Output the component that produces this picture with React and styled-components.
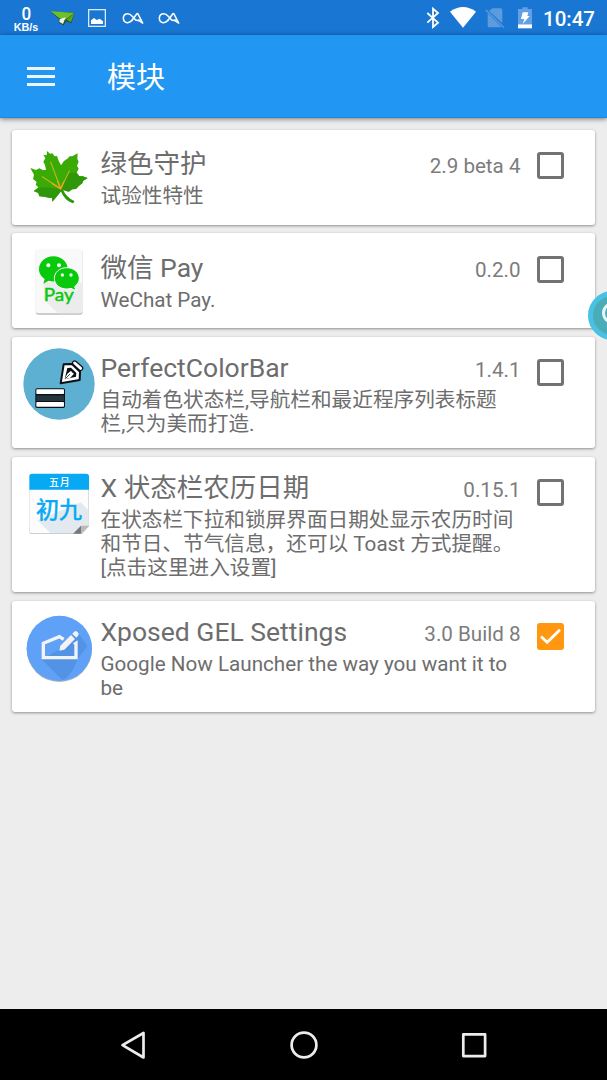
import React from 'react';
import styled, { createGlobalStyle } from 'styled-components';

const GlobalStyle = createGlobalStyle`
  * { box-sizing: border-box; }
  body {
    margin: 0;
    background: #ededed;
    font-family: Roboto, "Noto Sans CJK SC", sans-serif;
  }
`;

const Screen = styled.div`
  position: relative;
  display: flex;
  flex-direction: column;
  width: 607px;
  height: 1080px;
  overflow: hidden;
  background: #ededed;
`;

const StatusBar = styled.header`
  display: flex;
  align-items: center;
  justify-content: space-between;
  flex: none;
  height: 35px;
  padding: 0 12px 0 13px;
  background: #1976d2;
  color: #fff;
`;

const StatusGroup = styled.div`
  display: flex;
  align-items: center;
  height: 35px;
`;

const NetSpeed = styled.div`
  display: flex;
  flex-direction: column;
  align-items: center;
  width: 26px;
  padding-top: 1px;
`;

const SpeedValue = styled.span`
  font-size: 18.5px;
  font-weight: 500;
  line-height: 18px;
  transform: scaleX(0.92);
`;

const SpeedUnit = styled.span`
  font-family: "Liberation Sans", sans-serif;
  font-size: 10.8px;
  font-weight: 700;
  line-height: 9px;
`;

const StatusIcon = styled.svg`
  display: block;
  flex: none;
  width: ${(p) => p.$w}px;
  height: ${(p) => p.$h}px;
  margin-left: ${(p) => p.$gap}px;
`;

const Clock = styled.span`
  margin-left: 11px;
  padding-top: 2px;
  font-size: 20.5px;
  font-weight: 500;
  line-height: 24px;
`;

const Toolbar = styled.div`
  display: flex;
  align-items: center;
  flex: none;
  height: 83px;
  padding-left: 27px;
  background: #2196f3;
  border-bottom: 1px solid #1e88e0;
  box-shadow: 0 1px 5px rgba(0, 0, 0, 0.5);
  color: #fff;
`;

const MenuButton = styled.button`
  display: flex;
  flex-direction: column;
  gap: 5px;
  width: 28px;
  padding: 0;
  border: 0;
  background: none;
`;

const MenuLine = styled.span`
  height: 3px;
  background: #eef6fd;
`;

const Title = styled.h1`
  margin: 0 0 0 52px;
  padding-top: 4px;
  font-size: 29px;
  font-weight: 400;
  line-height: 40px;
`;

const ModuleList = styled.main`
  display: flex;
  flex: 1;
  flex-direction: column;
  gap: 8.5px;
  padding: 11.5px 12px 0;
`;

const Card = styled.article`
  display: flex;
  min-height: 95px;
  padding: 11.5px 31px 11.5px 11px;
  border-radius: 3px;
  background: #fff;
  box-shadow: 0 1px 3px rgba(0, 0, 0, 0.4);
`;

const ModuleIcon = styled.svg`
  display: block;
  flex: none;
  width: 72px;
  height: 72px;
`;

const Details = styled.div`
  flex: 1;
  align-self: center;
  min-width: 0;
  margin-left: 5.5px;
  color: #6d6d6d;
`;

const Heading = styled.div`
  display: flex;
  align-items: baseline;
  justify-content: space-between;
  height: 39.5px;
  padding-top: 3.5px;
  line-height: 32px;
`;

const ModuleName = styled.h2`
  margin: 0;
  font-size: 26.5px;
  font-weight: 400;
  line-height: 32px;
`;

const Version = styled.span`
  color: #7c7c7c;
  font-size: 20.6px;
`;

const Description = styled.p`
  margin: 0;
  padding: 0 4px 1px 0;
  font-size: 20.65px;
  line-height: 24px;
  white-space: pre-line;
`;

const Checkbox = styled.span`
  display: flex;
  align-items: center;
  justify-content: center;
  flex: none;
  width: 27px;
  height: 27px;
  margin: 11px 0 0 16.5px;
  border: ${(p) => (p.$checked ? '0' : '3px solid #727272')};
  border-radius: 3px;
  background: ${(p) => (p.$checked ? '#ff9810' : 'transparent')};
`;

const AssistBubble = styled.div`
  position: absolute;
  top: 290.5px;
  left: 588px;
  display: flex;
  align-items: center;
  justify-content: center;
  width: 49px;
  height: 49px;
  border: 5px solid #48c1e3;
  border-radius: 50%;
  background: #4bacb9;
`;

const BubbleRing = styled.span`
  width: 22px;
  height: 22px;
  margin-top: -4px;
  border: 3px solid #e8f4f6;
  border-radius: 50%;
`;

const NavBar = styled.nav`
  display: flex;
  align-items: center;
  justify-content: space-between;
  flex: none;
  height: 71px;
  padding: 0 118px;
  background: #000;
`;

const NavIcon = styled.svg`
  display: block;
  width: 30px;
  height: 30px;
  fill: none;
  stroke: #ececec;
  stroke-width: 2.7;
  stroke-linejoin: round;
`;

const LeafIcon = () => (
  <ModuleIcon viewBox="70 64 216 216">
    <path
      d="M142 94 L151 102 L158 101 L165 110 L172 109 L177 123 L184 137 L193 124 L203 117 L210 110 L218 110 L234 101 L233 117 L237 126 L232 138 L237 147 L231 159 L239 170 L249 170 L264 175 L250 184 L248 191 L238 198 L229 208 L218 209 L207 216 L190 211 Q198 232 224 245 L220 251 Q195 243 184 215 L177 224 L168 235 L158 246 L157 235 L145 234 L134 230 L119 230 L116 220 L102 214 L116 203 L108 195 L111 187 L100 178 L103 165 L92 145 L109 151 L119 146 L129 151 L139 151 L136 136 L131 126 L137 116 L131 105 L141 107 Z"
      fill="#3aab06"
    />
    <path
      d="M184 207 L203 159 L231 159 L239 170 L249 170 L264 175 L250 184 L248 191 L238 198 L229 208 L218 209 L207 216 L190 211 Q198 232 224 245 L220 251 Q195 243 184 215 L158 246 L157 235 L119 230 L116 220 L102 214 L125 202 Z"
      fill="#31970a"
    />
    <g fill="none" strokeLinecap="round">
      <path d="M183 207 L153 127 M183 207 L209 154 M183 207 L128 171" stroke="#c0b51f" strokeWidth="3.4" />
      <path d="M183 208 L174 185 M183 208 L192 187 M183 208 L158 192" stroke="#f0a41a" strokeWidth="4" />
    </g>
  </ModuleIcon>
);

const WeChatIcon = () => (
  <ModuleIcon viewBox="69 59 216 216">
    <rect x="107" y="72" width="141" height="196" rx="9" fill="#bdbdbd" />
    <rect x="106" y="70" width="142" height="194" rx="9" fill="#f9f9f9" />
    <path d="M131 173 L230 160 L248 178 V255 Q248 264 239 264 H174 L131 222 Z" fill="#ececec" />
    <path
      d="M160 93 C136 93 117 110 117 132 C117 145 124 154 134 161 L130 175 L146 166 Q155 169 164 168 C185 168 203 151 203 131 C203 110 184 93 160 93 Z"
      fill="#09c90c"
    />
    <path
      d="M200 127 C179 127 163 141 163 159 C163 177 179 191 200 191 Q207 191 213 189 L228 196 L224 184 C233 177 238 169 238 159 C238 141 221 127 200 127 Z"
      fill="#09c90c"
      stroke="#f7fff7"
      strokeWidth="3"
    />
    <g fill="#f3fff3">
      <circle cx="145" cy="120" r="6" />
      <circle cx="177" cy="120" r="6" />
      <circle cx="187" cy="149" r="5" />
      <circle cx="213" cy="149" r="5" />
    </g>
    <text
      x="131"
      y="226"
      fill="#09c90c"
      stroke="#09c90c"
      strokeWidth="1.4"
      fontFamily="Lato, sans-serif"
      fontSize="52"
      textLength="90"
      lengthAdjust="spacingAndGlyphs"
    >
      Pay
    </text>
  </ModuleIcon>
);

const ColorBarIcon = () => (
  <ModuleIcon viewBox="69 39 216 216">
    <circle cx="177" cy="147" r="107" fill="#5db0d2" />
    <rect x="106" y="160" width="89" height="59" rx="5" fill="#0b1014" />
    <rect x="109" y="181" width="83" height="17" fill="#25343d" />
    <rect x="109" y="163" width="83" height="14" rx="2" fill="#fff" />
    <rect x="109" y="201" width="83" height="14" rx="2" fill="#fff" />
    <g strokeLinejoin="round" strokeLinecap="round">
      <path d="M191 88 L216 87 L240 110 L239 135 L182 145 Z" fill="#fff" stroke="#0b1014" strokeWidth="6" />
      <path d="M202 99 L213 98 L229 114 L228 125 L194 133 Z" fill="#0b1014" />
      <path d="M194 133 L202 116 L213 107 L216 112 L222 116 L211 128 Z" fill="#fff" />
      <path d="M197 130 L209 118" fill="none" stroke="#0b1014" strokeWidth="2.4" />
      <path d="M224 84 L242 100" fill="none" stroke="#0b1014" strokeWidth="16" />
      <path d="M224 84 L242 100" fill="none" stroke="#fff" strokeWidth="9" />
    </g>
  </ModuleIcon>
);

const CalendarIcon = () => (
  <ModuleIcon viewBox="69 40 216 216">
    <path d="M88 104 H267 V215 L246 238 H94 Q88 238 88 232 Z" fill="#c9ced0" />
    <path d="M89 104 H265 V213 L243 235 H94 Q89 235 89 230 Z" fill="#fcfcfc" />
    <path d="M112 197 L243 143 L265 167 V213 L220 235 H151 Z" fill="#e3eaef" />
    <path d="M88 105 V65 Q88 57 96 57 H259 Q267 57 267 65 V105 Z" fill="#08a9f4" />
    <path d="M219 237 L243 213 V237 Z" fill="#777" />
    <path d="M243 213 H267 L243 237 Z" fill="#b9b9b9" />
    <text x="147" y="94" fill="#fff" fontSize="30" fontFamily="Noto Sans CJK SC, sans-serif" fontWeight="500" textLength="62">
      五月
    </text>
    <text x="108" y="189" fill="#08a9f4" stroke="#08a9f4" strokeWidth="1.8" fontSize="69" fontFamily="Noto Sans CJK SC, sans-serif" fontWeight="400" textLength="138">
      初九
    </text>
  </ModuleIcon>
);

const GelIcon = () => (
  <ModuleIcon viewBox="69 36 216 216">
    <circle cx="178" cy="148" r="98" fill="#a9b4c2" />
    <circle cx="178" cy="145" r="98" fill="#5ea1f6" />
    <path d="M125 178 L187 240 Q212 232 233 178 L262 138 L234 98 L180 148 Z" fill="#5293e6" />
    <path
      d="M191 118 L178 110 L130 130 V173 H228 V130 L222 134"
      fill="none"
      stroke="#f3f3f3"
      strokeWidth="10"
      strokeLinejoin="miter"
    />
    <path d="M178 152 L181 137 L213 105 L225 117 L193 149 Z" fill="#f3f3f3" />
    <path d="M217 101 L223 95 Q227 91 231 95 L235 99 Q238 103 234 107 L229 113 Z" fill="#f3f3f3" />
  </ModuleIcon>
);

const InfinityAIcon = ({ gap }) => (
  <StatusIcon $w={22} $h={14} $gap={gap} viewBox="0 0 66 42">
    <path
      d="M30 28 Q23 36 15 35 Q4 33 4 21 Q5 8 17 8 Q24 8 30 15 L39 25 Q45 31 52 27"
      fill="none"
      stroke="#fff"
      strokeWidth="4.6"
      strokeLinecap="round"
    />
    <path
      d="M29 29 L44 9 Q46 6 48 9 L62 36 L50 28"
      fill="none"
      stroke="#fff"
      strokeWidth="4.8"
      strokeLinecap="round"
      strokeLinejoin="round"
    />
  </StatusIcon>
);

const modules = [
  { name: '绿色守护', version: '2.9 beta 4', text: '试验性特性', Icon: LeafIcon },
  { name: '微信 Pay', version: '0.2.0', text: 'WeChat Pay.', Icon: WeChatIcon },
  {
    name: 'PerfectColorBar',
    version: '1.4.1',
    text: '自动着色状态栏,导航栏和最近程序列表标题栏,只为美而打造.',
    Icon: ColorBarIcon,
  },
  {
    name: 'X 状态栏农历日期',
    version: '0.15.1',
    text: '在状态栏下拉和锁屏界面日期处显示农历时间和节日、节气信息，还可以 Toast 方式提醒。\n[点击这里进入设置]',
    Icon: CalendarIcon,
  },
  {
    name: 'Xposed GEL Settings',
    version: '3.0 Build 8',
    text: 'Google Now Launcher the way you want it to be',
    Icon: GelIcon,
    checked: true,
  },
];

const ModuleCard = ({ name, version, text, Icon, checked }) => (
  <Card>
    <Icon />
    <Details>
      <Heading>
        <ModuleName>{name}</ModuleName>
        <Version>{version}</Version>
      </Heading>
      <Description>{text}</Description>
    </Details>
    <Checkbox role="checkbox" aria-checked={!!checked} $checked={checked}>
      {checked && (
        <svg width="27" height="27" viewBox="0 0 27 27" fill="none" stroke="#fff" strokeWidth="2.8">
          <path d="M4 13.5 L10.2 19.3 L23 6.7" />
        </svg>
      )}
    </Checkbox>
  </Card>
);

export default function App() {
  return (
    <Screen>
      <GlobalStyle />
      <StatusBar>
        <StatusGroup>
          <NetSpeed>
            <SpeedValue>0</SpeedValue>
            <SpeedUnit>KB/s</SpeedUnit>
          </NetSpeed>
          <StatusIcon $w={25} $h={16} $gap={11} viewBox="0 0 75 48">
            <path d="M1 4 L74 9 L64 40 L48 33 L41 46 L26 38 L27 27 Z" fill="#244b22" />
            <path d="M1 3 L73 9 L46 29 L27 24 Z" fill="#6cc02a" />
            <path d="M73 10 L49 29 L63 37 Z" fill="#5aa51f" />
            <path d="M29 27 L47 22 L39 42 L28 36 Z" fill="#e9f3df" />
          </StatusIcon>
          <StatusIcon $w={18} $h={18} $gap={13} viewBox="0 0 54 54">
            <rect x="2" y="2" width="50" height="50" fill="none" stroke="#e9f3fc" strokeWidth="3.6" />
            <path d="M9 45 V34 L18 27 L26 33 L35 29 L45 37 V45 Z" fill="#fff" />
          </StatusIcon>
          <InfinityAIcon gap={16} />
          <InfinityAIcon gap={14} />
        </StatusGroup>
        <StatusGroup>
          <StatusIcon $w={14} $h={22} $gap={0} viewBox="0 0 42 66">
            <path
              d="M4 18 L36 47 L21 60 V5 L36 18 L4 47"
              fill="none"
              stroke="#fff"
              strokeWidth="5.4"
              strokeLinejoin="miter"
            />
          </StatusIcon>
          <StatusIcon $w={26} $h={21} $gap={10} viewBox="0 0 78 63">
            <path d="M0 14 Q39 -14 78 14 L39 62 Z" fill="#fff" />
          </StatusIcon>
          <StatusIcon $w={20} $h={20} $gap={9} viewBox="0 0 60 60">
            <path d="M22 1 H47 Q52 1 52 6 V46 L12 9 Z M8 16 L50 57 Q48 58 46 58 H13 Q8 58 8 53 Z" fill="#5b9bde" />
            <path d="M2 5 L57 59" stroke="#5b9bde" strokeWidth="4" />
          </StatusIcon>
          <StatusIcon $w={14} $h={22} $gap={13} viewBox="0 0 42 66">
            <path d="M13 1 H29 V6 H42 V52 H0 V6 H13 Z" fill="#639fe4" />
            <path d="M0 52 H42 V64 H0 Z" fill="#fff" />
            <path d="M14 16 H31 L28 27 H35 L14 51 L19 36 H9 Z" fill="#fff" />
          </StatusIcon>
          <Clock>10:47</Clock>
        </StatusGroup>
      </StatusBar>
      <Toolbar>
        <MenuButton aria-label="menu">
          <MenuLine />
          <MenuLine />
          <MenuLine />
        </MenuButton>
        <Title>模块</Title>
      </Toolbar>
      <ModuleList>
        {modules.map((m) => (
          <ModuleCard key={m.name} {...m} />
        ))}
      </ModuleList>
      <AssistBubble>
        <BubbleRing />
      </AssistBubble>
      <NavBar>
        <NavIcon viewBox="0 0 30 30">
          <path d="M25.5 3 V27.5 L4.5 15.2 Z" />
        </NavIcon>
        <NavIcon viewBox="0 0 30 30">
          <circle cx="15" cy="15" r="12.4" />
        </NavIcon>
        <NavIcon viewBox="0 0 30 30">
          <rect x="4.3" y="4.3" width="21.8" height="21.8" />
        </NavIcon>
      </NavBar>
    </Screen>
  );
}
